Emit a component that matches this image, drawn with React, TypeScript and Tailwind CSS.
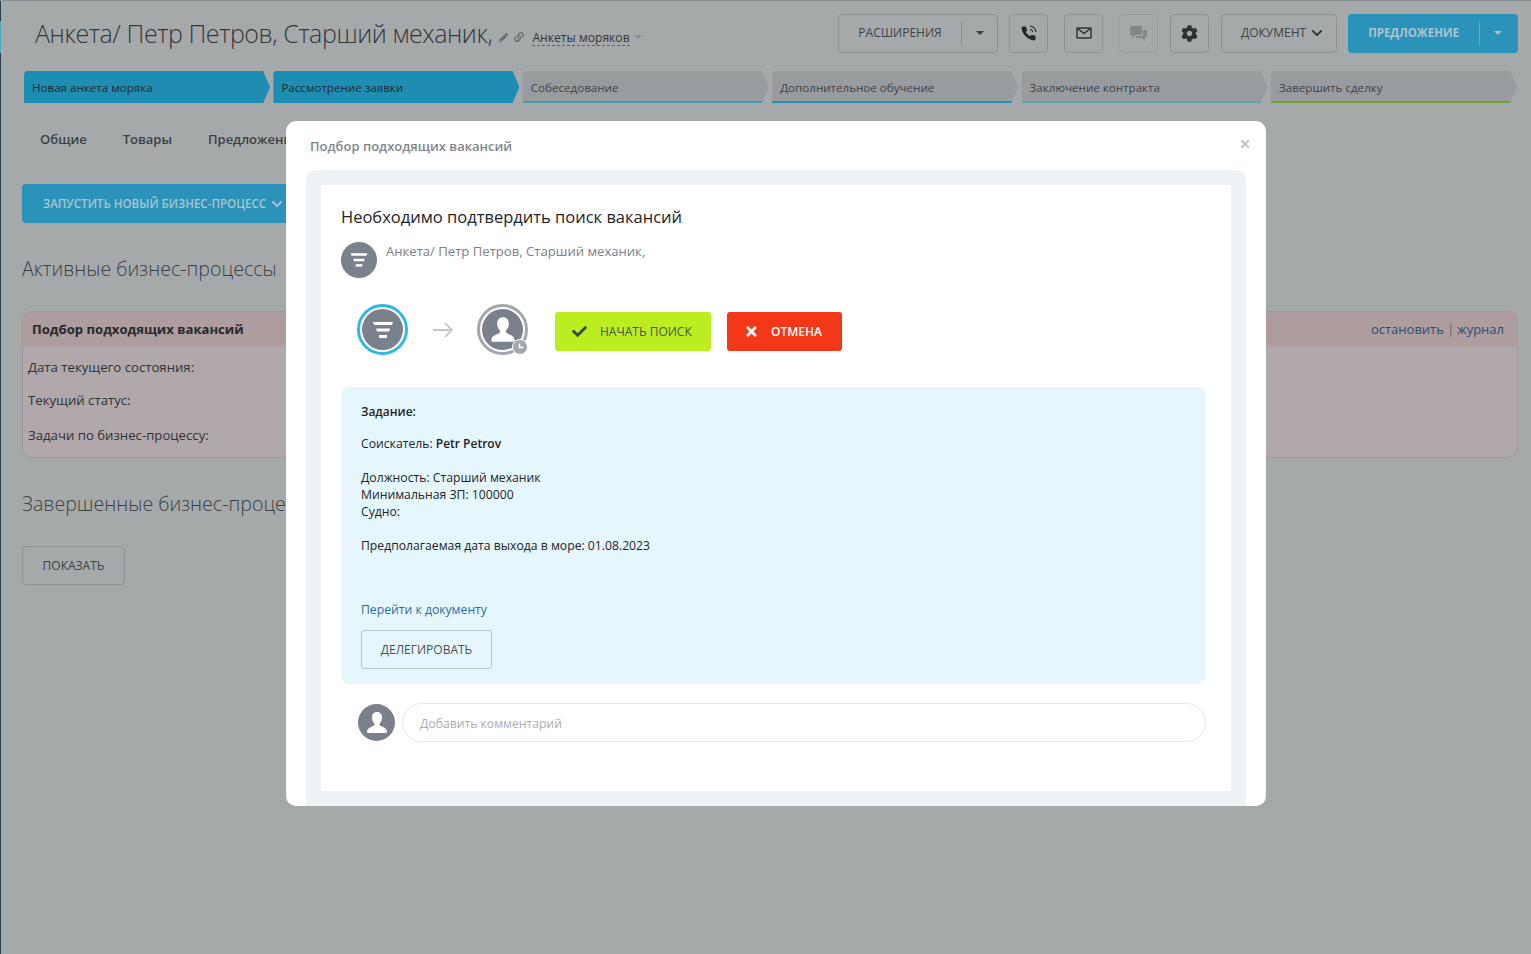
import { FaCheck, FaChevronDown, FaCog, FaLink, FaPencilAlt, FaTimes } from "react-icons/fa";

const stages = [
    { name: "Новая анкета моряка", active: true, line: "bg-[#1f8db2]" },
    { name: "Рассмотрение заявки", active: true, line: "bg-[#1f8db2]" },
    { name: "Собеседование", active: false, line: "bg-[#3f9fb0]" },
    { name: "Дополнительное обучение", active: false, line: "bg-[#2191b8]" },
    { name: "Заключение контракта", active: false, line: "bg-[#5ea8a0]" },
    { name: "Завершить сделку", active: false, line: "bg-[#74a32c]" },
];

function Funnel({ size }: { size: number }) {
    return (
        <svg width={size} height={size} viewBox="0 0 24 24" fill="white">
            <path d="M2 4h20l-1 3H3z" />
            <path d="M5 10.500h14l-1 3H6z" />
            <path d="M8 17h8v3H8z" />
        </svg>
    );
}

function Person({ size }: { size: number }) {
    return (
        <svg width={size} height={size} viewBox="0 0 24 24" fill="white">
            <path d="M12 1c-3 0-5 2.200-5 5.500 0 2.500 1 4.500 2.300 6 .4.500.3 1.600-.3 2.100C7.500 15.800 2.500 16.500 2 20.500c-.1 1.200.6 1.500 1.500 1.500h17c.9 0 1.600-.3 1.500-1.500-.5-4-5.500-4.700-7-5.900-.6-.5-.7-1.600-.3-2.100C16 11 17 9 17 6.500 17 3.200 15 1 12 1z" />
        </svg>
    );
}

function IconButton({ children, className }: { children: React.ReactNode; className: string }) {
    return (
        <div className={`w-[39px] h-[39px] flex items-center justify-center rounded-[4px] border border-[#8f9597] ${className}`}>
            {children}
        </div>
    );
}

export default function App() {
    return (
        <div className="relative h-screen overflow-hidden bg-[#a5a9aa] border-t border-[#8b9092] text-[#2f3336] font-['Open_Sans','Noto_Sans',sans-serif]">
            <div className="absolute left-0 top-0 h-full w-px bg-[#2c3e4e]" />
            <div className="absolute left-0 top-[20px] h-[32px] w-px bg-[#4fa3c4]" />

            <div className="pl-[22px] pr-[13px]">
                {/* header */}
                <div className="flex items-center h-[66px] pb-[2px]">
                    <h1 className="ml-[13px] mt-[2px] text-[25px] font-light tracking-[-0.43px] text-[#33383b] whitespace-nowrap">Анкета/ Петр Петров, Старший механик,</h1>
                    <FaPencilAlt className="ml-[7px] mt-[8px] text-[#5f6467]" size={9} />
                    <FaLink className="ml-[6px] mt-[8px] text-[#6d7275]" size={10} />
                    <span className="ml-[8px] mt-[9px] text-[12.100px] text-[#33383b] border-b border-dashed border-[#5f6467] leading-[15px]">Анкеты моряков</span>
                    <span className="ml-[4px] mt-[8px] w-0 h-0 border-x-[4px] border-x-transparent border-t-[4px] border-t-[#8b9092]" />

                    <div className="ml-auto flex items-center text-[12px] font-medium text-[#3f4447]">
                        <div className="w-[160px] h-[39px] flex items-center rounded-[4px] border border-[#8f9597]">
                            <span className="w-[122px] text-center">РАСШИРЕНИЯ</span>
                            <span className="h-[25px] w-px bg-[#8b9092]" />
                            <span className="ml-[14px] w-0 h-0 border-x-[4px] border-x-transparent border-t-[4px] border-t-[#3a3f42]" />
                        </div>
                        <IconButton className="ml-[11px]">
                            <svg width="17" height="17" viewBox="0 0 24 24" fill="none">
                                <path fill="#25292c" d="M22 16.920v3a2 2 0 0 1-2.180 2 19.790 19.790 0 0 1-8.630-3.070 19.500 19.500 0 0 1-6-6 19.790 19.790 0 0 1-3.070-8.670A2 2 0 0 1 4.110 2h3a2 2 0 0 1 2 1.720 12.840 12.840 0 0 0 .7 2.810 2 2 0 0 1-.45 2.110L8.090 9.910a16 16 0 0 0 6 6l1.270-1.270a2 2 0 0 1 2.110-.45 12.840 12.840 0 0 0 2.810.7A2 2 0 0 1 22 16.920z" />
                                <path stroke="#25292c" strokeWidth="1.500" d="M14 1.500a9 9 0 0 1 8.500 8.500M14 6a5 5 0 0 1 4 4" />
                            </svg>
                        </IconButton>
                        <IconButton className="ml-[16px]">
                            <svg width="16" height="12" viewBox="0 0 16 12" fill="none" stroke="#2f3336" strokeWidth="1.500">
                                <rect x="1" y="1" width="14" height="10" rx="0.500" />
                                <path d="M1.500 1.500l6.500 5 6.500-5" />
                            </svg>
                        </IconButton>
                        <IconButton className="ml-[16px] border-[#9aa0a2]">
                            <svg width="17" height="15" viewBox="0 0 17 15" fill="#83888a">
                                <path d="M0 0h12v9H5l-3 3V9H0z" />
                                <path d="M13 4h4v7h-2v4l-3-3H6v-2h7z" />
                            </svg>
                        </IconButton>
                        <IconButton className="ml-[12px]"><FaCog size={17} className="text-[#2d3134]" /></IconButton>
                        <div className="ml-[12px] w-[116px] h-[39px] flex items-center pl-[19px] gap-[5px] rounded-[4px] border border-[#8f9597]">
                            ДОКУМЕНТ <FaChevronDown size={12} className="text-[#33383b]" />
                        </div>
                        <div className="ml-[11px] w-[170px] h-[39px] flex items-center rounded-[4px] bg-[#2b93b9] text-[#a9c4cf] text-[11.500px] font-bold">
                            <span className="w-[131px] text-center">ПРЕДЛОЖЕНИЕ</span>
                            <span className="h-[25px] w-px bg-[#5aaac6]" />
                            <span className="ml-[14px] w-0 h-0 border-x-[4px] border-x-transparent border-t-[4px] border-t-[#a9c4cf]" />
                        </div>
                    </div>
                </div>

                {/* stages */}
                <div className="mt-[4px] ml-[2px] mr-[1px] flex gap-[3.300px]">
                    {stages.map((stage) => (
                        <div
                            key={stage.name}
                            className={`relative flex-1 h-[32px] flex items-center pl-[8px] pt-[1px] text-[11.600px] font-medium rounded-l-[4px] [clip-path:polygon(0_0,calc(100%-7px)_0,100%_50%,calc(100%-7px)_100%,0_100%)] ${stage.active ? "bg-[#1f8db2] text-[#1f2c33]" : "bg-[#999c9f] text-[#3e4346]"}`}
                        >
                            {stage.name}
                            <div className={`absolute left-0 bottom-0 w-full h-[2px] ${stage.line}`} />
                        </div>
                    ))}
                </div>

                {/* tabs */}
                <div className="mt-[26px] ml-[18px] flex gap-[36px] text-[13px] font-semibold text-[#3c4144] leading-[20px]">
                    <span>Общие</span>
                    <span>Товары</span>
                    <span>Предложения</span>
                </div>

                <div className="mt-[35px] w-[290px] h-[39px] flex items-center pl-[21px] gap-[5px] rounded-[4px] bg-[#2b93b9] text-[#a9c4cf] text-[11.600px] font-semibold whitespace-nowrap">
                    ЗАПУСТИТЬ НОВЫЙ БИЗНЕС-ПРОЦЕСС <FaChevronDown size={12} />
                </div>

                <h2 className="mt-[32px] text-[19.600px] font-light leading-[28px] text-[#3c4144]">Активные бизнес-процессы</h2>

                <div className="mt-[28px] h-[147px] rounded-[10px] border border-[#a39797] bg-[#b0a8aa] overflow-hidden text-[13.200px] text-[#2f3336]">
                    <div className="h-[35px] flex items-center justify-between pl-[9px] pr-[13px] bg-[#ad9d9e]">
                        <span className="text-[13.100px] font-bold text-[#25292c]">Подбор подходящих вакансий</span>
                        <span className="flex gap-[3px] text-[13px] text-[#2c4f78]">
                            <span>остановить</span>
                            <span className="text-[#5f6467]">|</span>
                            <span>журнал</span>
                        </span>
                    </div>
                    <div className="pl-[5px]">
                        <p className="mt-[11px] leading-[18px]">Дата текущего состояния:</p>
                        <p className="mt-[15px] leading-[18px]">Текущий статус:</p>
                        <p className="mt-[17px] leading-[18px]">Задачи по бизнес-процессу:</p>
                    </div>
                </div>

                <h2 className="mt-[32px] text-[19.600px] font-light leading-[28px] text-[#3c4144] whitespace-nowrap">Завершенные бизнес-процессы</h2>

                <div className="mt-[28px] w-[103px] h-[39px] flex items-center justify-center rounded-[4px] border border-[#8f9597] text-[12px] font-medium text-[#3f4447]">
                    ПОКАЗАТЬ
                </div>
            </div>

            {/* modal */}
            <div className="absolute left-[286px] top-[120px] w-[980px] h-[685px] rounded-[10px] bg-white px-[20px] overflow-hidden">
                <FaTimes className="absolute right-[15px] top-[17px] text-[#c2c6c9]" size={12} />
                <div className="h-[49px] flex items-center pt-[2px] pl-[4px] text-[13px] font-semibold text-[#80868b]">Подбор подходящих вакансий</div>
                <div className="h-[636px] rounded-t-[10px] bg-[#eef2f5] p-[15px]">
                    <div className="h-[606px] bg-white pl-[20px] pr-[25px]">
                        <h3 className="pt-[21px] text-[16.500px] font-medium leading-[22px] text-[#1f2326]">Необходимо подтвердить поиск вакансий</h3>

                        <div className="mt-[14px] flex">
                            <div className="w-[36px] h-[36px] rounded-full bg-[#7a818d] flex items-center justify-center"><Funnel size={20} /></div>
                            <span className="ml-[9px] text-[13.100px] leading-[18px] text-[#7b8085]">Анкета/ Петр Петров, Старший механик,</span>
                        </div>

                        <div className="mt-[26px] ml-[16px] flex items-center">
                            <div className="w-[51px] h-[51px] rounded-full border-[3px] border-[#2fb8e6] p-[2px]">
                                <div className="w-full h-full rounded-full bg-[#7a818d] flex items-center justify-center"><Funnel size={24} /></div>
                            </div>
                            <svg className="ml-[25px]" width="20" height="16" viewBox="0 0 20 16" fill="none" stroke="#c4c8cc" strokeWidth="1.800">
                                <path d="M0 8h19M12 1l7 7-7 7" />
                            </svg>
                            <div className="relative ml-[24px] w-[51px] h-[51px] rounded-full border-[3px] border-[#a2a7ad] p-[2px]">
                                <div className="w-full h-full rounded-full bg-[#7a818d] flex items-center justify-center"><Person size={28} /></div>
                                <div className="absolute -right-[3px] -bottom-[3px] w-[16px] h-[16px] rounded-full border border-white bg-[#a2a7ad] flex items-center justify-center">
                                    <svg width="10" height="10" viewBox="0 0 10 10" fill="none" stroke="white" strokeWidth="1.600"><path d="M4.500 1.500v4h4" /></svg>
                                </div>
                            </div>
                            <div className="ml-[27px] mt-[4px] w-[156px] h-[39px] flex items-center pl-[17px] gap-[13px] rounded-[3px] bg-[#bbed21] text-[12px] text-[#4a5255] font-medium">
                                <FaCheck size={15} className="text-[#3f474a]" /> НАЧАТЬ ПОИСК
                            </div>
                            <div className="ml-[16px] mt-[4px] w-[115px] h-[39px] flex items-center pl-[17px] gap-[12px] rounded-[3px] bg-[#f33819] text-[12px] text-white font-semibold">
                                <FaTimes size={15} /> ОТМЕНА
                            </div>
                        </div>

                        <div className="mt-[32px] h-[297px] rounded-[8px] bg-[#e5f7fd] pl-[20px] pt-[16px] text-[12.200px] leading-[17px] text-[#1f2326]">
                            <p className="text-[12px] font-semibold">Задание:</p>
                            <p className="mt-[15px]">Соискатель: <span className="text-[12px] font-semibold">Petr Petrov</span></p>
                            <p className="mt-[17px]">Должность: Старший механик</p>
                            <p>Минимальная ЗП: 100000</p>
                            <p>Судно:</p>
                            <p className="mt-[17px]">Предполагаемая дата выхода в море: 01.08.2023</p>
                            <p className="mt-[47px] text-[#2f6a9e]">Перейти к документу</p>
                            <div className="mt-[12px] w-[131px] h-[39px] flex items-center justify-center rounded-[3px] border border-[#b7c6cc] text-[12px] text-[#4a5053] font-medium">ДЕЛЕГИРОВАТЬ</div>
                        </div>

                        <div className="mt-[19px] ml-[17px] flex items-center">
                            <div className="w-[37px] h-[37px] rounded-full bg-[#7a818d] flex items-center justify-center"><Person size={24} /></div>
                            <div className="ml-[7px] flex-1 h-[39px] flex items-center pl-[17px] pt-[3px] rounded-full border border-[#e3e6e8] text-[12.200px] text-[#a9adb1]">Добавить комментарий</div>
                        </div>
                    </div>
                </div>
            </div>
        </div>
    );
}
